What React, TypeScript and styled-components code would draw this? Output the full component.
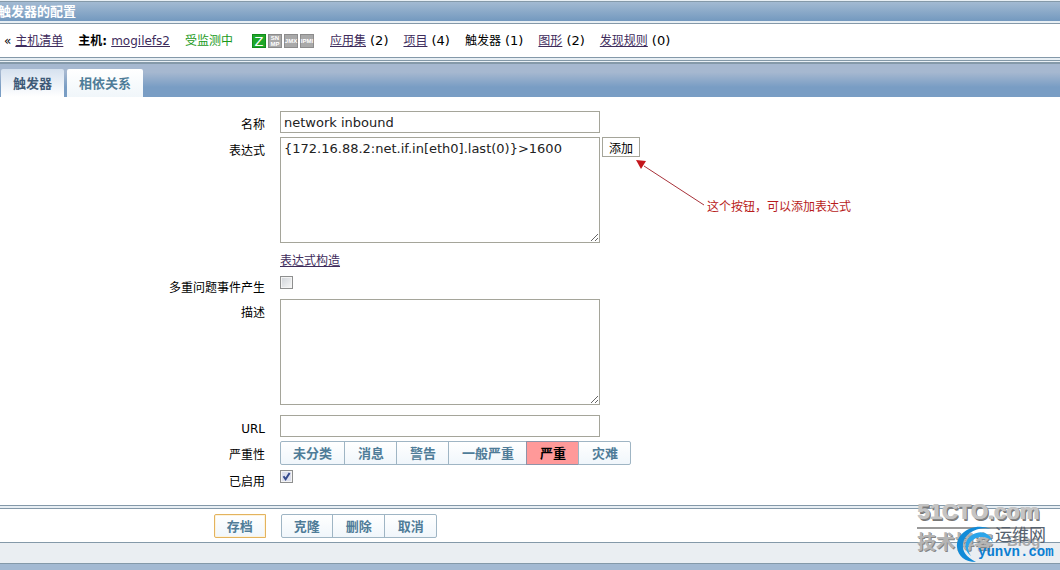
import React from "react";
import styled, { createGlobalStyle, css } from "styled-components";

const sans = '"DejaVu Sans", "Noto Sans CJK SC", sans-serif';
const line = "#8499a9";
const pale = "#e8eff4";

const GlobalStyle = createGlobalStyle`
  * { box-sizing: border-box; }
  body { margin: 0; background: #fff; color: #000; font: 12px/16px ${sans}; }
  button, input, textarea { font-family: inherit; margin: 0; }
`;

const Page = styled.div`
  border-top: 1px solid ${pale};
  overflow: hidden;
`;

const TitleBar = styled.h1`
  margin: 0;
  height: 20px;
  border-top: 1px solid ${line};
  background: linear-gradient(#a3bad2, #7399bf);
  color: #fff;
  font-size: 13px;
  font-weight: bold;
  line-height: 20px;
  text-indent: -2px;
`;

const Rule = styled.div<{ $gap: number }>`
  height: ${(p) => p.$gap + 1}px;
  background: ${pale};
  border-bottom: 1px solid ${line};
`;

const HostNav = styled.nav`
  display: flex;
  align-items: center;
  gap: 15px;
  height: 34px;
  padding-left: 4px;
  border-bottom: 1px solid ${line};
  white-space: nowrap;
`;

const NavItem = styled.span`
  display: flex;
  gap: 4px;
`;

const Count = styled.span`
  font-size: 13px;
`;

const Link = styled.a`
  color: #3e2c5c;
  text-decoration: underline;
`;

const Monitored = styled.span`
  color: #1a9a1a;
`;

const Badges = styled.span`
  display: flex;
  gap: 2px;
  padding: 0 1px 0 4px;

  svg { display: block; }
`;

const TabBar = styled.div`
  display: flex;
  align-items: flex-end;
  gap: 3px;
  height: 34px;
  padding-left: 1px;
  border-top: 1px solid ${line};
  background: linear-gradient(#a6b8d0 25%, #799dc4 70%);
`;

const Tab = styled.button<{ $active?: boolean }>`
  height: 28px;
  padding: 2px 12px 0;
  border: 0;
  border-radius: 2px 2px 0 0;
  background: linear-gradient(#fff, #f0f6fa);
  color: #4f7c98;
  font-size: 13px;
  font-weight: bold;
  line-height: 24px;
  ${(p) => p.$active && css`
    background: linear-gradient(#d5e1ef, #fff);
    color: #3e5a78;
  `}
`;

const Form = styled.form`
  padding-top: 14px;
`;

const Row = styled.div<{ $height: number }>`
  display: grid;
  grid-template-columns: 25% 1fr;
  column-gap: 15px;
  align-items: start;
  min-height: ${(p) => p.$height}px;
`;

const Label = styled.label<{ $short?: boolean }>`
  padding-top: ${(p) => (p.$short ? 4 : 6)}px;
  text-align: right;
`;

const Field = styled.div`
  display: flex;
  align-items: flex-start;
  gap: 2px;
  position: relative;
`;

const fieldBox = css`
  width: 320px;
  border: 1px solid #a5a59a;
  border-radius: 0;
  background: #fff;
  color: #222;
  font-size: 13px;
  outline: 0;
`;

const TextInput = styled.input`
  ${fieldBox}
  height: 22px;
  padding: 0 3px;
`;

const TextArea = styled.textarea`
  ${fieldBox}
  display: block;
  height: 106px;
  padding: 2px 3px;
  line-height: 18px;
  resize: both;
`;

const AddButton = styled.button`
  height: 20px;
  width: 38px;
  padding: 0;
  border: 1px solid #a5a59a;
  background: #fff;
  color: #000;
  font-size: 12px;
`;

const Check = styled.input`
  appearance: none;
  width: 13px;
  height: 13px;
  border: 1px solid #8e8f8f;
  background: linear-gradient(135deg, #cfd3d8, #f8f8f8);
  box-shadow: inset 0 0 0 1px #f4f4f4;

  &:checked {
    background: #dde0ee url("data:image/svg+xml,%3Csvg xmlns='http://www.w3.org/2000/svg' viewBox='0 0 11 11'%3E%3Cpath d='M2.5 5.2 4.6 8.2 8.6 2' fill='none' stroke='%23354a8c' stroke-width='2'/%3E%3C/svg%3E");
  }
`;

const ButtonGroup = styled.div`
  display: flex;
`;

const GroupButton = styled.button<{ $tone?: "save" | "high" }>`
  height: 24px;
  padding: 2px 12px 0;
  border: 1px solid #9fb5c4;
  background: linear-gradient(#fff, #f0f6fb);
  color: #4f7c98;
  font-size: 13px;
  font-weight: bold;
  line-height: 20px;

  & + & { margin-left: -1px; padding-left: 13px; }
  &:first-child { border-radius: 2px 0 0 2px; }
  &:last-child { border-radius: 0 2px 2px 0; }

  ${(p) => p.$tone === "save" && css`
    border-color: #e3b35e;
    box-shadow: inset 0 0 0 1px #fdf3dd;
  `}
  ${(p) => p.$tone === "high" && css`
    background: #ff9999;
    border-color: #8f93a8;
    color: #000;
  `}
`;

const Note = styled.div`
  position: absolute;
  left: 356px;
  top: 23px;
  display: flex;
  align-items: flex-end;
  gap: 1px;
  color: #b81c1c;
  white-space: nowrap;

  svg { display: block; margin-bottom: 8px; }
`;

const Footer = styled.footer`
  position: relative;
  border-top: 1px solid ${line};
`;

const Actions = styled.div`
  display: grid;
  grid-template-columns: 25% 1fr;
  column-gap: 15px;
  justify-items: end;
  padding: 5px 0 4px 1px;

  > :last-child { justify-self: start; }
`;

const StatusStrip = styled.div`
  height: 22px;
  border: solid ${line};
  border-width: 1px 0;
  background: #eaeef2;
`;

const BottomBar = styled.div`
  height: 6px;
  background: #a3b9d2;
`;

const Watermark = styled.div`
  position: absolute;
  right: 3px;
  bottom: 4px;
  width: 140px;
  height: 70px;
  pointer-events: none;
  white-space: nowrap;

  svg { position: absolute; left: 0; top: 0; }
`;

const SiteName = styled.div`
  border-bottom: 2px solid #999;
  margin-right: 16px;
  color: #c4c4c4;
  font: bold 22px/31px "Liberation Sans", sans-serif;
  text-shadow: 1px 0 #c4c4c4, 2px 1px #858585, 2px 2px #777;
`;

const SiteBlog = styled.div`
  color: #b4b4b4;
  font: bold 19px/24px "Noto Sans CJK SC", sans-serif;
  text-shadow: 1px 1px #858585;
`;

function Badge({ lines, on }: { lines: string[]; on?: boolean }) {
  const stacked = lines.length > 1;
  return (
    <svg width="14" height="14" viewBox="0 0 14 14">
      <rect x="0.5" y="0.5" width="13" height="13" fill={on ? "#1fa82a" : "#a9a9a9"} stroke={on ? "#128a1c" : "#8c8c8c"} />
      {lines.map((t, i) => (
        <text
          key={t}
          x="7"
          y={on ? 12 : stacked ? 6 + i * 6 : 9}
          textAnchor="middle"
          fill="#fff"
          fontFamily={on ? "DejaVu Sans" : "Liberation Sans"}
          fontSize={on ? 13 : 6}
          fontWeight={on ? "normal" : "bold"}
        >
          {t}
        </text>
      ))}
    </svg>
  );
}

const sections = [
  { name: "应用集", count: 2 },
  { name: "项目", count: 4 },
  { name: "触发器", count: 1, current: true },
  { name: "图形", count: 2 },
  { name: "发现规则", count: 0 },
];

const severities = ["未分类", "消息", "警告", "一般严重", "严重", "灾难"];

export default function App() {
  return (
    <Page>
      <GlobalStyle />
      <TitleBar>触发器的配置</TitleBar>
      <Rule $gap={2} />
      <HostNav>
        <NavItem>
          <span>«</span>
          <Link href="#hosts">主机清单</Link>
        </NavItem>
        <NavItem>
          <b>主机:</b>
          <Link href="#host">mogilefs2</Link>
        </NavItem>
        <Monitored>受监测中</Monitored>
        <Badges>
          <Badge lines={["Z"]} on />
          <Badge lines={["SN", "MP"]} />
          <Badge lines={["JMX"]} />
          <Badge lines={["IPMI"]} />
        </Badges>
        {sections.map((s) => (
          <NavItem key={s.name}>
            {s.current ? <span>{s.name}</span> : <Link href={"#" + s.name}>{s.name}</Link>}
            <Count>({s.count})</Count>
          </NavItem>
        ))}
      </HostNav>
      <Rule $gap={2} />
      <Rule $gap={1} />
      <TabBar>
        <Tab type="button" $active>触发器</Tab>
        <Tab type="button">相依关系</Tab>
      </TabBar>

      <Form>
        <Row $height={26}>
          <Label htmlFor="name">名称</Label>
          <Field>
            <TextInput id="name" defaultValue="network inbound" />
          </Field>
        </Row>
        <Row $height={116}>
          <Label htmlFor="expression">表达式</Label>
          <Field>
            <TextArea id="expression" spellCheck={false} defaultValue="{172.16.88.2:net.if.in[eth0].last(0)}>1600" />
            <AddButton type="button">添加</AddButton>
            <Note>
              <svg width="70" height="47" viewBox="0 0 70 47">
                <path d="M8 6 68 45" stroke="#a8323a" strokeWidth="1" fill="none" />
                <path d="M0 0 10 1 5 9Z" fill="#c4161c" />
              </svg>
              <span>这个按钮，可以添加表达式</span>
            </Note>
          </Field>
        </Row>
        <Row $height={23}>
          <span />
          <Field>
            <Link href="#constructor">表达式构造</Link>
          </Field>
        </Row>
        <Row $height={23}>
          <Label htmlFor="multiple" $short>多重问题事件产生</Label>
          <Field>
            <Check id="multiple" type="checkbox" />
          </Field>
        </Row>
        <Row $height={116}>
          <Label htmlFor="description">描述</Label>
          <Field>
            <TextArea id="description" />
          </Field>
        </Row>
        <Row $height={26}>
          <Label htmlFor="url">URL</Label>
          <Field>
            <TextInput id="url" />
          </Field>
        </Row>
        <Row $height={29}>
          <Label as="span" id="severity">严重性</Label>
          <ButtonGroup role="group" aria-labelledby="severity">
            {severities.map((s) => (
              <GroupButton key={s} type="button" $tone={s === "严重" ? "high" : undefined}>{s}</GroupButton>
            ))}
          </ButtonGroup>
        </Row>
        <Row $height={35}>
          <Label htmlFor="enabled" $short>已启用</Label>
          <Field>
            <Check id="enabled" type="checkbox" defaultChecked />
          </Field>
        </Row>
      </Form>

      <Footer>
        <Rule $gap={2} />
        <Actions>
          <GroupButton type="button" $tone="save">存档</GroupButton>
          <ButtonGroup>
            <GroupButton type="button">克隆</GroupButton>
            <GroupButton type="button">删除</GroupButton>
            <GroupButton type="button">取消</GroupButton>
          </ButtonGroup>
        </Actions>
        <StatusStrip />
        <BottomBar />
        <Watermark>
          <SiteName>51CTO.com</SiteName>
          <SiteBlog>技术博客</SiteBlog>
          <svg width="140" height="70" viewBox="0 0 140 70">
            <text x="90" y="50" fill="#aaa" fontFamily="Liberation Sans" fontWeight="bold" fontSize="15">Blog</text>
            <path d="M74 33C56 26 39 37 40 51C41 60 48 66 59 66C49 61 45 55 46 48C47 38 60 30 74 33Z" fill="#128bd8" />
            <path d="M55 39C64 33 73 37 76 46C71 41 63 39 56 44C50 48 50 54 54 60C46 54 47 44 55 39Z" fill="#2ba5ea" />
            <text x="78" y="45" fill="#566270" fontFamily="Noto Sans CJK SC" fontSize="17">运维网</text>
            <text x="61" y="60" fill="#0c7fd2" fontFamily="Liberation Mono" fontWeight="bold" fontSize="14">yunvn.com</text>
          </svg>
        </Watermark>
      </Footer>
    </Page>
  );
}
